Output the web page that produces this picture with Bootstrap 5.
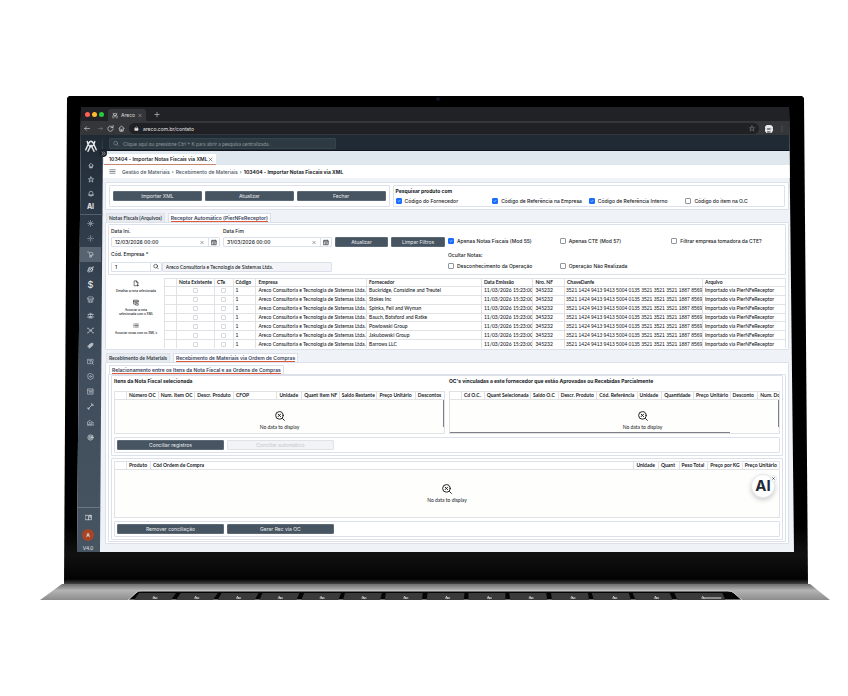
<!DOCTYPE html>
<html lang="pt-BR">
<head>
<meta charset="utf-8">
<meta name="viewport" content="width=device-width, initial-scale=1">
<title>Areco - Importar Notas Fiscais via XML</title>
<link href="https://cdn.jsdelivr.net/npm/bootstrap@5.3.0/dist/css/bootstrap.min.css" rel="stylesheet">
<style>
:root{--line:#dbe0ea;--slate:#475461;--ink:#15181d}
body{background:#fff;font-family:Inter,"Liberation Sans",sans-serif;font-size:5px;line-height:6px;color:var(--ink);padding-top:96px}
svg{display:block;fill:none;stroke:currentColor;stroke-linecap:round;stroke-linejoin:round}
button,input{font:inherit;color:inherit}
a{color:inherit;text-decoration:none}
.ico{width:7px;height:7px;stroke-width:1.5;flex:none}
.i4{width:4px}.i5{width:5px}.i6{width:6px}
.lato{font-family:Lato,sans-serif}
.lid{margin:0 40px 0 64px;padding:11px 14px 32px 13px;background:linear-gradient(#000 88%,#111 94%,#030303 99%,#444);clip-path:polygon(3px 2px,5px 0,calc(100% - 6px) 0,calc(100% - 4px) 2px,100% 100%,0 100%)}
.camera{left:50%;top:1px;width:4px;height:4px;background:#0b1524}
.display{clip-path:polygon(4px 0,calc(100% - 5px) 0,100% 100%,0 100%);background:#eff3f8}
.tabstrip{height:15px;background:#202226;padding-left:8px;color:#ddd;border-bottom:1px solid #35363a}
.dots{gap:2px}
.dot{width:5px;height:5px}
.dot-r{background:#fe5f57}.dot-y{background:#febb2e}.dot-g{background:#28c840}
.btab{height:12px;width:38px;background:#35363a;border-radius:3px 3px 0 0;margin-left:4px;padding:0 4px}
.toolbar{height:13px;background:#35363a;color:#e4e4e4;padding:0 11px 0 7px}
.url{height:11px;background:#202124;padding:0 4px 0 5px;margin-right:6px}
.side{width:26px;flex:none;background:linear-gradient(#1f2a34,#2d3947 18%,#3f4d5c 55%,#475461);clip-path:polygon(0 0,100% 0,23px 100%,0 100%);color:#e1e5e9}
.side a{display:flex;align-items:center;justify-content:center;height:15px}
.brand{padding:5px 0 0 8px}
.brand svg{width:12px;height:12px;stroke-width:2}
.side .grp-a{padding:6px 2px 0 3px}
.side .grp-a a{height:14px}
.side .grp-b{height:231px;padding:1px 2px 0 3px;border-top:1px solid #51606d}
.side .grp-b a{flex:1}
.side .grp-c{padding:2px 4px 1px 0;border-top:1px solid #6b7884}
.side .on{background:#566370}
.ai-link{font-size:7px;font-weight:700}
.cash{font-size:9px;font-weight:500}
.avatar{width:12px;height:12px;padding:0;border:0;background:#a84524;font-weight:600;line-height:12px}
.appbar{height:16px;background:#1f2a34;padding:3px 0 2px 6px;border-bottom:1px solid #10161c}
.seek{width:227px;height:11px;background:#2d3a42;border:1px solid #35434c;border-radius:1px;color:#8e999f;padding:0 3px}
.seek input{background:none;border:0;outline:0;padding:0;width:200px;height:8px}
.seek input::placeholder{color:#8e999f;opacity:1}
.doctabs{height:14px;background:#dfe7ef;padding:3px 0 0 1px}
.doctab{width:112px;background:#fff;border-bottom:1px solid #c4866c;padding:0 3px 0 5px;font-weight:600}
.crumbs{height:13px;background:#fff;padding-left:6px;gap:2px;color:#4a5563;font-weight:500}
.work{padding:4px 5px 8px 2px}
.box{background:#fff;border:1px solid var(--line);border-radius:1px}
.act{background:var(--slate);border:1px solid #5d6975;color:#e8ecef;height:10px;line-height:8px;padding:0;border-radius:1px;text-align:center}
.act:disabled{background:#f1f3f5;border-color:#dfe3e8;color:#c3c8ce}
.search-row{padding:2px 3px;gap:3px}
.trio{width:41.5%;padding:0 3px;gap:3px}
.prod{padding:2px;flex:1}
.four{display:grid;grid-template-columns:repeat(4,1fr);margin-top:4px}
.chk{display:flex;align-items:center;gap:3px;min-height:0;margin:0;padding:0;white-space:nowrap;font-weight:500}
.chk .form-check-input{width:6px;height:6px;margin:0;float:none;border:1px solid #9197a0;border-radius:1px;flex:none}
.chk .form-check-input:checked{background-color:#1a6dff;border-color:#1a6dff}
.strip{height:9px;gap:3px;padding-left:1px;white-space:nowrap;font-weight:600;color:#333b47}
.strip.top{margin-top:3px}
.strip button{border:1px solid var(--line);border-bottom:0;background:#e8ebf0;padding:0 2px;line-height:6px;border-radius:1px 1px 0 0;font-family:Lato,sans-serif;font-weight:700}
.strip button.cur{background:#fff;color:#34415c;font-family:inherit;font-weight:600}
.cur span{display:block;border-bottom:1px solid #dc5a3c}
.pane{padding:1px 2px}
.pane-b{padding:2px 2px 1px}
.pane-c{padding:0 2px 1px}
.pane-d{padding:2px}
.filters{display:grid;grid-template-columns:109fr 109fr 53fr 54fr 335fr;column-gap:3px;padding:2px;height:51px}
.fld{height:10px;border:1px solid var(--line);border-radius:1px;background:#fff;min-width:0}
.fld input{border:0;outline:0;background:none;padding:0 0 0 3px;min-width:0;flex:1;height:8px;font-weight:500}
.fld button{border:0;border-left:1px solid var(--line);background:none;width:11px;padding:0;height:8px;flex:none}
.fld.ro,.fld.ro input{background:#f2f4f7}
.code{width:23%}
.lbl{font-weight:500;line-height:6px}
.lbl-a{margin:1px 0 3px}
.lbl-b{margin:3px 0 5px}
.lbl-c{margin:8px 0 5px}
.drop{margin-top:10px}
.opts{grid-row:span 2;padding-top:11px}
.company{grid-column:1/3}
.checks{display:grid;grid-template-columns:1fr 1fr 1fr}
table{table-layout:fixed;width:100%;border-collapse:collapse;font-family:Lato,sans-serif;font-size:5px;line-height:5px;white-space:nowrap}
th,td{border:1px solid #e0e2e5;padding:1px 2px;overflow:hidden;font-weight:500}
th{font-weight:700}
.notes-row{margin-top:3px}
.notes{height:70px}
.notes tbody tr:last-child td{border-bottom:0}
.notes td:nth-child(9){font-family:"Liberation Sans",sans-serif;padding:1px 0 1px 1px}
.notes td input{display:block;width:5px;height:5px;margin:0 auto;border:1px solid #d5d8dc;border-radius:1px;appearance:none;background:#fff}
.tools{width:56px;flex:none;font-size:3px;line-height:4px;text-align:center;font-weight:500;padding-top:2px}
.tools button{border:0;background:none;padding:0;display:block;width:100%;margin-bottom:6px}
.tools .ico{margin:0 auto 2px}
.half{width:50%;min-width:0}
.ttl{height:13px;font-weight:700;white-space:nowrap}
.pair{gap:4px}
.items{padding:2px;margin-bottom:2px}
.acts{margin-top:3px;padding:2px;gap:3px}
.acts .act{width:16.2%}
.void{background:#fefefc;border:1px solid #e0e2e5;border-top:0;font-family:Lato,sans-serif;line-height:5px;gap:4px}
.void>.ico{width:10px;height:10px}
.void-s{height:34px;padding-top:8px}.void-m{height:48px}.void-off{padding-left:56px}
.scroll-y{right:0;top:0;width:1px;height:27px;background:#7c8087}
.scroll-x{left:0;bottom:0;width:85%;height:1px;background:#7c8087}
.aibub{right:4px;top:4px;width:24px;height:24px;background:#fff;box-shadow:0 2px 5px #0003;border:1px solid #e4e8ee;font-family:Inter,sans-serif;font-size:15px;line-height:22px;font-weight:700;color:#1f2a37;padding:0}
.aix{right:2px;top:5px;width:7px;height:7px;background:#fff;border:1px solid #e0e4ea;padding:0}
.aix .ico{width:3px;height:5px;stroke-width:3}
.knob{left:35px;top:53px;width:8px;height:8px;padding:0;border:0;background:#1b232c;color:#fff}
.deck{margin:0 18px 0 40px}
.deck svg{width:100%;height:16px;stroke-linecap:butt}
</style>
<script src="https://cdn.jsdelivr.net/npm/bootstrap@5.3.0/dist/js/bootstrap.bundle.min.js"></script>
</head>
<body>
<svg width="0" height="0" class="position-absolute" aria-hidden="true">
<symbol id="x" viewBox="0 0 16 16"><path d="M3 3l10 10M13 3L3 13"/></symbol>
<symbol id="home" viewBox="0 0 16 16"><path d="M2 8l6-6 6 6M4 7v7h8V7M7 14v-4h2v4"/></symbol>
<symbol id="star" viewBox="0 0 16 16"><path d="M8 1l2 5h5l-4 3 2 6-5-4-5 4 2-6-4-3h5z"/></symbol>
<symbol id="bell" viewBox="0 0 16 16"><path d="M3 12V7a5 5 0 0 1 10 0v5zM1 12h14M7 15h2"/></symbol>
<symbol id="virus" viewBox="0 0 16 16"><circle cx="8" cy="8" r="3" fill="currentColor"/><path d="M8 1v4M8 11v4M1 8h4M11 8h4M3 3l3 3M10 10l3 3M13 3l-3 3M6 10l-3 3"/></symbol>
<symbol id="hub" viewBox="0 0 16 16"><circle cx="8" cy="8" r="2"/><path d="M8 1v5M8 10v5M1 8h5M10 8h5M4 4h0M12 4h0M4 12h0M12 12h0"/></symbol>
<symbol id="cart" viewBox="0 0 16 16"><path d="M1 2h3l3 9M6 4l6-1 2 5-6 2M7 11l7-2"/><circle cx="8" cy="13" r="2"/></symbol>
<symbol id="globe" viewBox="0 0 16 16"><circle cx="8" cy="8" r="5"/><path d="M1 11L14 4M5 4l6 8M12 3l3-1M2 13l2 1"/></symbol>
<symbol id="shop" viewBox="0 0 16 16"><path d="M1 6l2-4h10l2 4zM3 6v8h10V6M6 14v-5h4v5"/></symbol>
<symbol id="people" viewBox="0 0 16 16"><g fill="currentColor"><circle cx="8" cy="5" r="2"/><circle cx="3" cy="6" r="1"/><circle cx="13" cy="6" r="1"/><path d="M4 13c0-5 8-5 8 0z"/></g><path d="M1 12c0-3 2-3 3-2M15 12c0-3-2-3-3-2"/></symbol>
<symbol id="nodes" viewBox="0 0 16 16"><circle cx="8" cy="8" r="2"/><path d="M2 3l5 4M14 3L9 7M2 13l5-4M14 13L9 9M1 3h3M12 3h3M1 13h3M12 13h3"/></symbol>
<symbol id="tag" viewBox="0 0 16 16"><path d="M2 9l7-6 5 0-1 5-7 6z" fill="currentColor"/></symbol>
<symbol id="card" viewBox="0 0 16 16"><path d="M7 13H1V3h13v4M4 6h6"/><circle cx="10" cy="10" r="3"/><path d="M12 12l3 3"/></symbol>
<symbol id="link" viewBox="0 0 16 16"><path d="M5 12H1V2h13v5M1 5h13M5 8h6M8 11h6v4H8z"/></symbol>
<symbol id="gear" viewBox="0 0 16 16"><path d="M8 1l6 3v8l-6 3-6-3V4z"/><circle cx="8" cy="8" r="2"/></symbol>
<symbol id="sheet" viewBox="0 0 16 16"><path d="M2 2h12v12H2zM2 5h12M5 8h1M8 8h4M5 11h1M8 11h4"/></symbol>
<symbol id="tool" viewBox="0 0 16 16"><path d="M3 13L12 4M11 1l0 4 4 0M1 12l2-1 2 2-1 2"/></symbol>
<symbol id="bank" viewBox="0 0 16 16"><path d="M2 6l5-3 3 3v7H2zM1 14h14M12 7h2v6M5 8h2M5 11h2"/></symbol>
<symbol id="ok" viewBox="0 0 16 16"><circle cx="8" cy="8" r="6"/><circle cx="8" cy="8" r="3"/><path d="M7 8l2 1 4-5"/></symbol>
<symbol id="book" viewBox="0 0 16 16"><path d="M1 3h6l1 1 1-1h6v10H1zM8 4v9M11 3v5l1-1 1 1V3"/></symbol>
<symbol id="find" viewBox="0 0 16 16"><circle cx="7" cy="7" r="5"/><path d="M11 11l4 4"/></symbol>
<symbol id="cal" viewBox="0 0 16 16"><path d="M2 3h12v11H2zM2 6h12M5 1v2M11 1v2M5 9h6M5 12h6"/></symbol>
<symbol id="none" viewBox="0 0 16 16"><circle cx="7" cy="7" r="6"/><path d="M5 5l4 4M9 5L5 9M12 12l3 3"/></symbol>
<symbol id="doc" viewBox="0 0 16 16"><path d="M7 14H3V1h6l4 4v4M9 1v4h4M9 13h6M12 10v5"/></symbol>
<symbol id="list" viewBox="0 0 16 16"><path d="M2 4h1M2 8h1M2 12h1M6 4h8M6 8h8M6 12h8"/></symbol>
<symbol id="menu" viewBox="0 0 16 16"><path d="M2 4h12M2 8h12M2 12h12"/></symbol>
<symbol id="logo" viewBox="0 0 16 16"><path d="M1 13L5 4Q8-1 11 4l4 9M4 15l4-8 4 8M3 2q1 6 5 7 4-1 5-7"/></symbol>
</svg>

<main>
<div class="lid position-relative">
<div class="camera position-absolute rounded-circle"></div>
<div class="display">
  <div class="tabstrip d-flex align-items-center">
    <div class="dots d-flex"><span class="dot dot-r rounded-circle"></span><span class="dot dot-y rounded-circle"></span><span class="dot dot-g rounded-circle"></span></div>
    <div class="btab d-flex align-items-center align-self-end justify-content-between"><svg class="ico i6"><use href="#logo"/></svg><span>Areco</span><svg class="ico i4"><use href="#x"/></svg></div>
    <svg class="ico i6 ms-2" viewBox="0 0 16 16"><path d="M8 2v12M2 8h12"/></svg>
  </div>
  <div class="toolbar d-flex align-items-center">
    <svg class="ico i6 me-2" viewBox="0 0 16 16"><path d="M15 8H2M7 3L2 8l5 5"/></svg>
    <svg class="ico i5 me-1 opacity-50" viewBox="0 0 16 16"><path d="M1 8h13M9 3l5 5-5 5"/></svg>
    <svg class="ico me-1" viewBox="0 0 16 16"><path d="M13 5a6 6 0 1 0 1 4M14 1v5h-5"/></svg>
    <svg class="ico me-1"><use href="#home"/></svg>
    <div class="url d-flex align-items-center rounded-pill flex-fill"><svg class="ico i5 me-1" viewBox="0 0 16 16"><path d="M3 7h10v7H3z" fill="currentColor"/><path d="M5 7V4q3-4 6 0v3"/></svg><span class="flex-fill">areco.com.br/contato</span><svg class="ico i6 opacity-50"><use href="#star"/></svg></div>
    <svg viewBox="0 0 8 8" width="8" height="8" stroke="none"><circle cx="4" cy="4" r="4" fill="#e9eef3"/><path d="M0 3h8v1H0z" fill="#4a6f96"/><path d="M2 3h4v2H2zM2 6h4v2H2z" fill="#2d2522"/></svg>
    <svg class="ms-2 opacity-50" viewBox="0 0 2 8" width="2" height="6"><path d="M1 1h0M1 4h0M1 7h0"/></svg>
  </div>
  <div class="d-flex">
    <nav class="side d-flex flex-column" aria-label="Menu principal">
      <div class="brand"><svg viewBox="0 0 16 16"><use href="#logo"/></svg></div>
      <div class="grp-a flex-column d-flex">
        <a href="#" aria-label="Início"><svg class="ico i6"><use href="#home"/></svg></a><a href="#" aria-label="Favoritos"><svg class="ico i6"><use href="#star"/></svg></a><a href="#" aria-label="Avisos"><svg class="ico i6"><use href="#bell"/></svg></a><a href="#" class="ai-link">AI</a>
      </div>
      <div class="grp-b d-flex flex-column">
        <a href="#" aria-label="Módulo 1"><svg class="ico opacity-50"><use href="#virus"/></svg></a><a href="#" aria-label="Módulo 2"><svg class="ico opacity-50"><use href="#hub"/></svg></a><a href="#" class="on" aria-label="Materiais"><svg class="ico opacity-75"><use href="#cart"/></svg></a><a href="#" aria-label="Fiscal"><svg class="ico"><use href="#globe"/></svg></a><a href="#" class="cash">$</a><a href="#" aria-label="Loja"><svg class="ico opacity-75"><use href="#shop"/></svg></a><a href="#" aria-label="Pessoas"><svg class="ico opacity-75"><use href="#people"/></svg></a><a href="#" aria-label="Processos"><svg class="ico opacity-75"><use href="#nodes"/></svg></a><a href="#" aria-label="Preços"><svg class="ico opacity-75"><use href="#tag"/></svg></a><a href="#" aria-label="Consulta"><svg class="ico opacity-75"><use href="#card"/></svg></a><a href="#" aria-label="Configuração"><svg class="ico opacity-75"><use href="#gear"/></svg></a><a href="#" aria-label="Relatórios"><svg class="ico opacity-75"><use href="#sheet"/></svg></a><a href="#" aria-label="Ferramentas"><svg class="ico"><use href="#tool"/></svg></a><a href="#" aria-label="Patrimônio"><svg class="ico opacity-75"><use href="#bank"/></svg></a><a href="#" aria-label="Qualidade"><svg class="ico"><use href="#ok"/></svg></a>
      </div>
      <div class="grp-c mt-auto d-flex flex-column align-items-center">
        <a href="#" aria-label="Manual"><svg class="ico"><use href="#book"/></svg></a>
        <button class="avatar rounded-circle my-1">A</button>
        <span class="lato">V4.0</span>
      </div>
    </nav>
    <div class="flex-fill overflow-hidden">
      <div class="appbar"><label class="seek lato d-flex align-items-center gap-1"><svg class="ico i6"><use href="#find"/></svg><input type="search" placeholder="Clique aqui ou pressione Ctrl + K para abrir a pesquisa centralizada." aria-label="Pesquisa"></label></div>
      <div class="doctabs d-flex"><div class="doctab d-flex align-items-center justify-content-between"><span>103404 - Importar Notas Fiscais via XML</span><svg class="ico i5"><use href="#x"/></svg></div></div>
      <nav class="crumbs d-flex align-items-center"><svg class="ico me-1"><use href="#menu"/></svg><a href="#">Gestão de Materiais</a><span>›</span><a href="#">Recebimento de Materiais</a><span>›</span><span class="fw-bold text-dark">103404 - Importar Notas Fiscais via XML</span></nav>
      <div class="work">
        <section class="box search-row d-flex">
          <div class="box trio d-flex align-items-center"><button class="act flex-fill w-100">Importar XML</button><button class="act flex-fill w-100">Atualizar</button><button class="act flex-fill w-100">Fechar</button></div>
          <div class="box prod"><div class="fw-bold">Pesquisar produto com</div>
            <div class="four"><label class="chk"><input class="form-check-input" type="checkbox" checked>Código do Fornecedor</label><label class="chk"><input class="form-check-input" type="checkbox" checked>Código de Referência na Empresa</label><label class="chk"><input class="form-check-input" type="checkbox" checked>Código de Referência Interno</label><label class="chk"><input class="form-check-input" type="checkbox">Código do item na O.C</label></div></div>
        </section>
        <div class="strip top d-flex"><button>Notas Fiscais (Arquivos)</button><button class="cur"><span>Receptor Automático (PierNFeReceptor)</span></button></div>
        <section class="box pane">
          <div class="box filters">
            <div><label class="lbl lbl-a d-block" for="d1">Data Ini.</label><div class="fld d-flex align-items-center"><input id="d1" value="12/03/2026 00:00"><svg class="ico i4 me-1"><use href="#x"/></svg><button aria-label="Calendário"><svg class="ico i6 mx-auto"><use href="#cal"/></svg></button></div></div>
            <div><label class="lbl lbl-a d-block" for="d2">Data Fim</label><div class="fld d-flex align-items-center"><input id="d2" value="31/03/2026 00:00"><svg class="ico i4 me-1"><use href="#x"/></svg><button aria-label="Calendário"><svg class="ico i6 mx-auto"><use href="#cal"/></svg></button></div></div>
            <button class="act drop">Atualizar</button><button class="act drop">Limpar Filtros</button>
            <div class="opts"><div class="checks"><label class="chk"><input class="form-check-input" type="checkbox" checked>Apenas Notas Fiscais (Mod 55)</label><label class="chk"><input class="form-check-input" type="checkbox">Apenas CTE (Mod 57)</label><label class="chk"><input class="form-check-input" type="checkbox">Filtrar empresa tomadora da CTE?</label></div><div class="lbl lbl-c">Ocultar Notas:</div><div class="checks"><label class="chk"><input class="form-check-input" type="checkbox">Desconhecimento da Operação</label><label class="chk"><input class="form-check-input" type="checkbox">Operação Não Realizada</label></div></div>
            <div class="company"><label class="lbl lbl-b d-block" for="ce">Cód. Empresa *</label><div class="d-flex"><div class="fld code d-flex align-items-center"><input id="ce" value="1"><button aria-label="Buscar"><svg class="ico i6 mx-auto"><use href="#find"/></svg></button></div><div class="fld ro lato flex-fill d-flex"><input readonly value="Areco Consultoria e Tecnologia de Sistemas Ltda." aria-label="Empresa"></div></div></div>
          </div>
          <div class="notes-row d-flex">
            <div class="tools"><button><svg class="ico i6"><use href="#doc"/></svg>Detalhar a nota selecionada</button><button><svg class="ico i6"><use href="#link"/></svg>Associar a nota<br>selecionada com o XML</button><button><svg class="ico i6"><use href="#list"/></svg>Associar notas com os XML's</button></div>
            <table class="notes" id="notes"><colgroup><col style="width:12px"><col style="width:6.1%"><col style="width:3%"><col style="width:3.7%"><col style="width:17.8%"><col style="width:18.5%"><col style="width:8.3%"><col style="width:5.1%"><col style="width:22.2%"><col></colgroup><thead><tr><th></th><th>Nota Existente</th><th>CTe</th><th>Código</th><th>Empresa</th><th>Fornecedor</th><th>Data Emissão</th><th>Nro. NF</th><th>ChaveDanfe</th><th>Arquivo</th></tr></thead><tbody></tbody></table>
          </div>
        </section>
        <div class="strip top d-flex"><button>Recebimento de Materiais</button><button class="cur"><span>Recebimento de Materiais via Ordem de Compras</span></button></div>
        <section class="box pane-b">
          <div class="strip d-flex"><button class="cur"><span>Relacionamento entre os Itens da Nota Fiscal e as Ordens de Compras</span></button></div>
          <div class="box pane-c">
            <div class="box items">
              <div class="pair d-flex">
                <div class="half"><div class="ttl">Itens da Nota Fiscal selecionada</div>
                <table><colgroup><col style="width:12px"><col style="width:9.6%"><col style="width:11.1%"><col style="width:11.7%"><col style="width:13.2%"><col style="width:7.5%"><col style="width:11.4%"><col style="width:11.4%"><col style="width:11.6%"><col></colgroup><thead><tr><th></th><th>Número OC</th><th>Num. Item OC</th><th>Descr. Produto</th><th>CFOP</th><th>Unidade</th><th>Quant Item NF</th><th>Saldo Restante</th><th>Preço Unitário</th><th>Descontos</th></tr></thead></table>
                <div class="void void-s position-relative d-flex flex-column align-items-center justify-content-center"><svg class="ico"><use href="#none"/></svg>No data to display<span class="scroll-y position-absolute"></span></div></div>
                <div class="half"><div class="ttl">OC's vinculadas a este fornecedor que estão Aprovadas ou Recebidas Parcialmente</div>
                <table><colgroup><col style="width:12px"><col style="width:6.9%"><col style="width:14%"><col style="width:8.4%"><col style="width:11.7%"><col style="width:12.2%"><col style="width:7.5%"><col style="width:9.6%"><col style="width:11.1%"><col style="width:8.4%"><col></colgroup><thead><tr><th></th><th>Cd O.C.</th><th>Quant Selecionada</th><th>Saldo O.C</th><th>Descr. Produto</th><th>Cód. Referência</th><th>Unidade</th><th>Quantidade</th><th>Preço Unitário</th><th>Desconto</th><th>Num. Do</th></tr></thead></table>
                <div class="void void-s void-off position-relative d-flex flex-column align-items-center justify-content-center"><svg class="ico"><use href="#none"/></svg>No data to display<span class="scroll-y position-absolute"></span><span class="scroll-x position-absolute"></span></div></div>
              </div>
              <div class="box acts d-flex"><button class="act">Conciliar registros</button><button class="act" disabled>Conciliar automático</button></div>
            </div>
            <div class="box pane-d">
              <table><colgroup><col style="width:12px"><col style="width:3.6%"><col><col style="width:3.7%"><col style="width:3.1%"><col style="width:4.3%"><col style="width:5.2%"><col style="width:5.6%"></colgroup><thead><tr><th></th><th>Produto</th><th>Cód Ordem de Compra</th><th>Unidade</th><th>Quant</th><th>Peso Total</th><th>Preço por KG</th><th>Preço Unitário</th></tr></thead></table>
              <div class="void void-m position-relative d-flex flex-column align-items-center justify-content-center"><svg class="ico"><use href="#none"/></svg>No data to display<button class="aibub position-absolute rounded-circle">AI</button><button class="aix position-absolute rounded-circle" aria-label="Fechar"><svg class="ico mx-auto"><use href="#x"/></svg></button></div>
              <div class="box acts d-flex"><button class="act">Remover conciliação</button><button class="act">Gerar Rec via OC</button></div>
            </div>
          </div>
        </section>
      </div>
    </div>
  </div>
</div>
<button class="knob position-absolute rounded-circle" aria-label="Expandir menu"><svg class="ico i5 mx-auto" viewBox="0 0 16 16"><path d="M3 3l4 5-4 5M9 3l4 5-4 5"/></svg></button>
</div>
<div class="deck"><svg viewBox="0 0 790 16" preserveAspectRatio="none" id="deck" aria-hidden="true"></svg></div>
</main>
<script>
const firms=["Buckridge, Considine and Treutel","Stokes Inc","Spinka, Feil and Wyman","Bauch, Botsford and Ratke","Powlowski Group","Jakubowski Group","Barrows LLC"];
document.querySelector("#notes tbody").innerHTML=firms.map((f,i)=>`<tr><td></td><td><input type="checkbox" aria-label="Nota existente"></td><td><input type="checkbox" aria-label="CTe"></td><td>1</td><td>Areco Consultoria e Tecnologia de Sistemas Ltda.</td><td>${f}</td><td>11/03/2026 15:${i==1?32:23}:00</td><td>345232</td><td>3521 1424 9413 9413 5004 0135 3521 3521 3521 1887 8569</td><td>Importado via PierNFeReceptor</td></tr>`).join("");
let g='<defs><linearGradient id="metal" x2="0" y2="1"><stop stop-color="#6e6e6e"/><stop offset=".4" stop-color="#b4b4b4"/><stop offset="1" stop-color="#8c8c8c"/></linearGradient></defs><path d="M0 16L22 0H770L790 16z" fill="url(#metal)" stroke="none"/><path d="M88 16L97 8Q98 7 101 7H688Q692 7 694 9L702 16z" fill="#050505" stroke="#d0d0d0"/>';
for(let i=0;i<14;i++){const x=94+i*41.8,w=i==13?48:37,s=Math.round((6.5-i)/1.5);g+=`<path d="M${x} 16l${s+1} -7h${w}l${-s-1} 7z" fill="#3a3a3a" stroke="none"/><path d="M${x+w/2} 14h${i==13?20:5}" stroke="#ddd"/><path d="M${x+w/2+1} 12l2 3" stroke="#ccc"/>`}
document.getElementById("deck").innerHTML=g;
</script>
</body>
</html>
